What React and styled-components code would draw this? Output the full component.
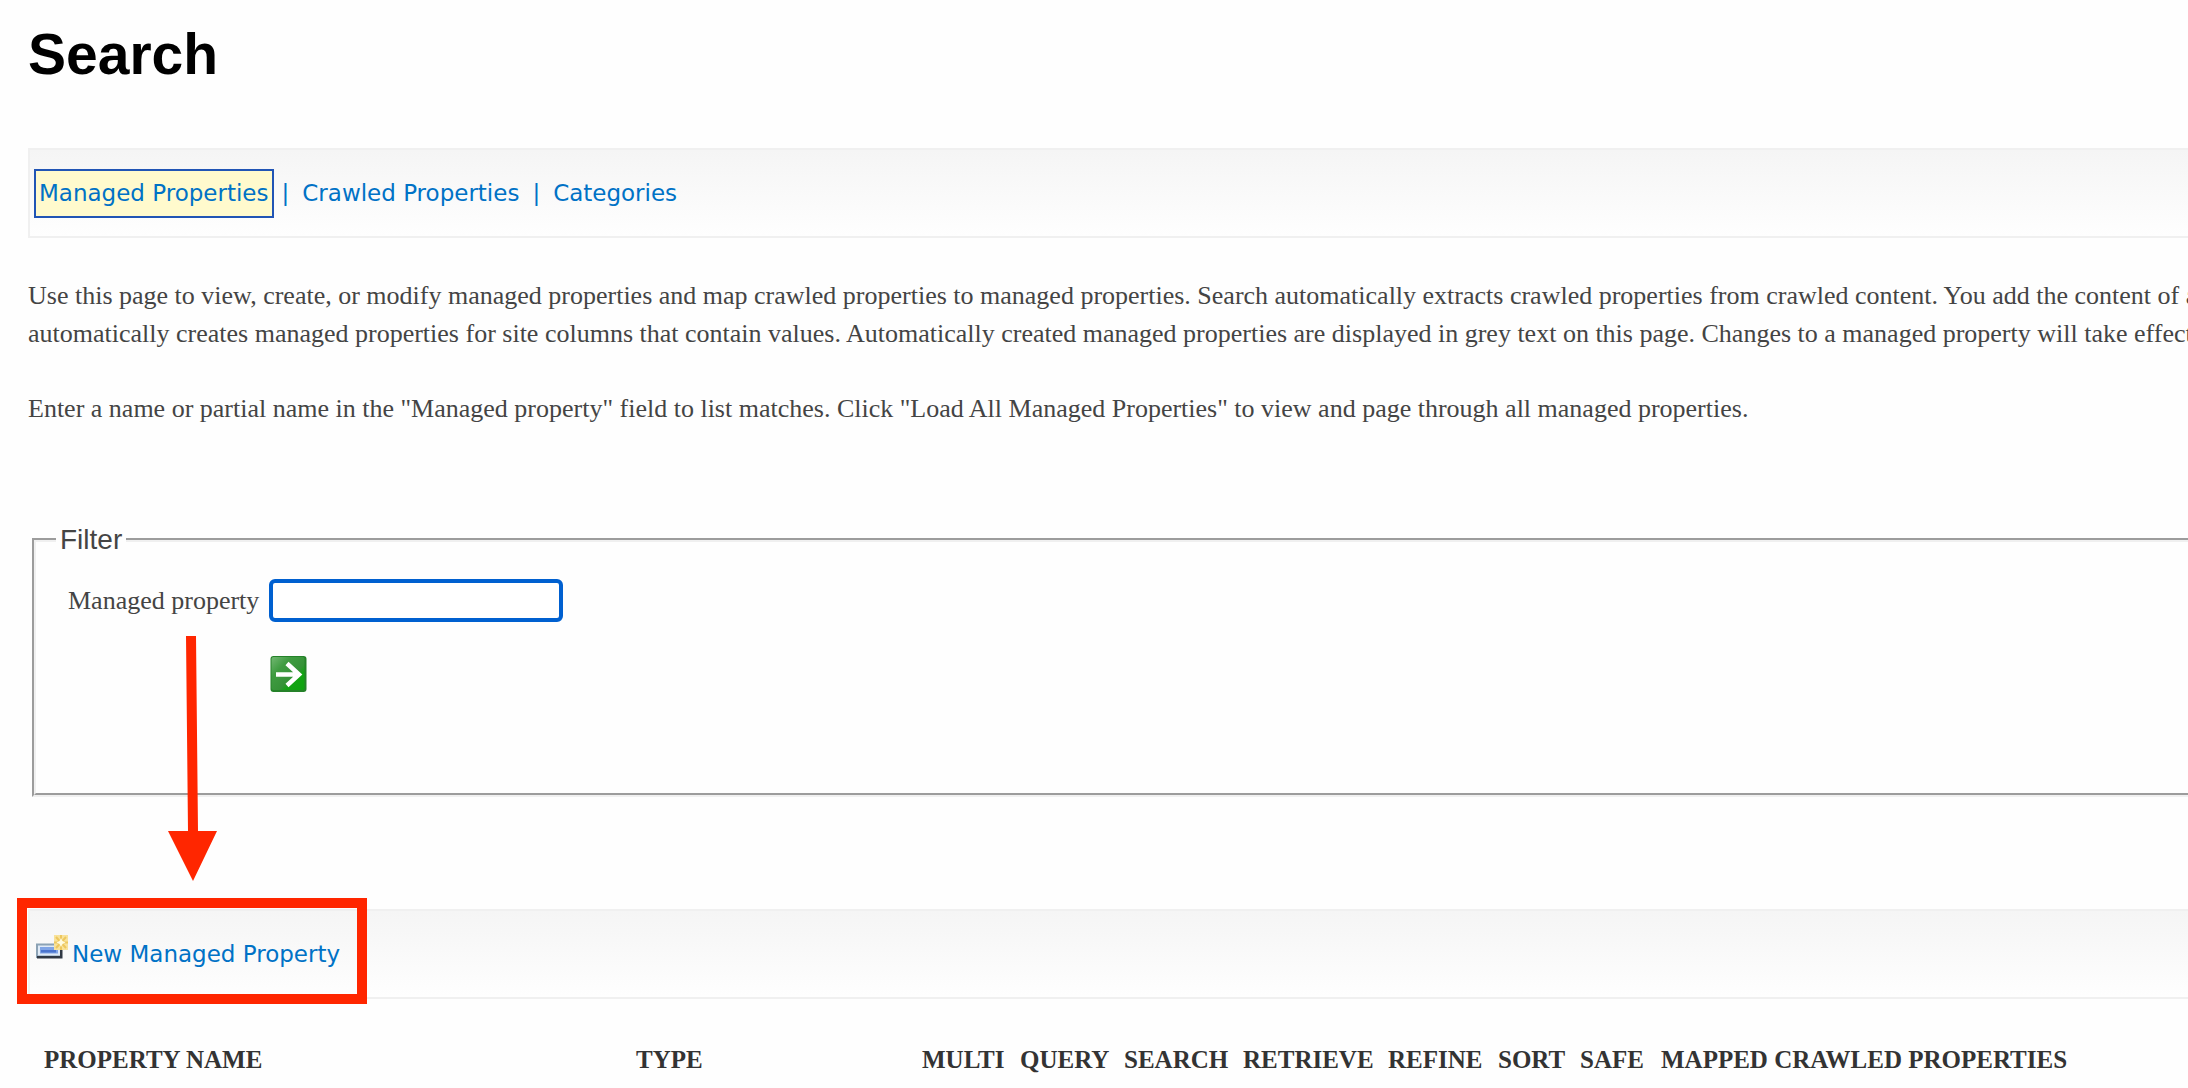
import React from "react";
import styled, { createGlobalStyle } from "styled-components";

const serif = `"Liberation Serif", "Times New Roman", serif`;
const sans = `"Liberation Sans", Arial, sans-serif`;
const verdana = `Verdana, "DejaVu Sans", sans-serif`;

const GlobalStyle = createGlobalStyle`
  * { box-sizing: border-box; }
  html { overflow: hidden; }
  body {
    margin: 0;
    background: #fefefe;
    color: #444;
    font-family: ${serif};
    font-size: 26px;
    line-height: 38px;
  }
`;

const Page = styled.main`
  position: relative;
  padding: 22px 0 0 28px;
  overflow: hidden;
`;

const Title = styled.h1`
  margin: 0 0 62px;
  color: #000;
  font: bold 57px/64px ${sans};
`;

const Bar = styled.nav`
  display: flex;
  align-items: center;
  gap: 8px;
  height: 90px;
  padding: 1px 0 0 4px;
  border: 2px solid #f0f0f0;
  border-right: 0;
  background: linear-gradient(#f5f5f5, #fefefe);
  color: #0072c6;
  font: 23px/45px ${verdana};
`;

const BarLink = styled.a`
  color: #0072c6;
  text-decoration: none;
  padding: 0 3px;
  border: 2px solid ${(p) => (p.$active ? "#2155b5" : "transparent")};
  background: ${(p) => (p.$active ? "#fffacd" : "transparent")};
`;

const Intro = styled.section`
  padding: 39px 0 0;
  white-space: nowrap;
`;

const Paragraph = styled.p`
  margin: 0 0 37px;
`;

const Filter = styled.fieldset`
  height: 272px;
  margin: 97px 0 112px 4px;
  padding: 24px 0 0 32px;
  border: 4px groove #f0f0f0;
  border-right: 0;
`;

const Legend = styled.legend`
  margin-left: -12px;
  padding: 0 4px;
  font: 28px/30px ${sans};
`;

const FilterForm = styled.form`
  display: grid;
  grid-template-columns: 193px 294px;
  column-gap: 8px;
  row-gap: 33px;
  align-items: center;
  white-space: nowrap;
`;

const TextInput = styled.input`
  width: 100%;
  height: 43px;
  padding: 0 8px;
  border: 4px solid #0060d0;
  border-radius: 6px;
  outline: none;
  background: #fff;
  color: #444;
  font: 26px ${serif};
`;

const GoButton = styled.button`
  grid-column: 2;
  width: 38px;
  height: 38px;
  padding: 0;
  border: 0;
  background: none;
  svg { display: block; }
`;

const Properties = styled.table`
  margin-top: 42px;
  margin-left: 8px;
  border-collapse: collapse;
  color: #333;
  white-space: nowrap;
`;

const HeaderCell = styled.th`
  width: ${(p) => (p.$width ? p.$width + "px" : "auto")};
  min-width: ${(p) => (p.$width ? p.$width + "px" : "0")};
  padding: 0 4px 0 8px;
  text-align: left;
  font: bold 25px/38px ${serif};
`;

const Annotation = styled.svg`
  position: absolute;
  left: 0;
  top: 0;
  pointer-events: none;
`;

const columns = [
  ["PROPERTY NAME", 592],
  ["TYPE", 286],
  ["MULTI", 98],
  ["QUERY", 104],
  ["SEARCH", 119],
  ["RETRIEVE", 145],
  ["REFINE", 110],
  ["SORT", 82],
  ["SAFE", 81],
  ["MAPPED CRAWLED PROPERTIES", 0],
];

function GoIcon() {
  return (
    <svg width="38" height="38" viewBox="0 0 38 38" aria-hidden="true">
      <defs>
        <linearGradient id="go" x1="0" y1="0" x2="1" y2="1">
          <stop offset="0" stopColor="#72b772" />
          <stop offset=".3" stopColor="#3f9c41" />
          <stop offset=".6" stopColor="#369238" />
          <stop offset=".72" stopColor="#12a312" />
          <stop offset="1" stopColor="#0da30d" />
        </linearGradient>
      </defs>
      <rect x="1.5" y="1" width="36" height="36" rx="3" fill="#258229" />
      <rect x="2.5" y="2" width="33" height="33" rx="2" fill="url(#go)" />
      <path d="M7 19.5H31M18 8.5L30 19.5L18 30.500" fill="none" stroke="#fff" strokeWidth="4.500" />
    </svg>
  );
}

function NewItemIcon() {
  return (
    <svg width="33" height="26" viewBox="0 0 33 26" aria-hidden="true">
      <path d="M0 8.500H26V23H0Z" fill="#8ba2b5" />
      <path d="M1 21H24V10H26.500V23.500H1Z" fill="#303844" />
      <path d="M2 10.500H24V20.500H2Z" fill="#dfeaf7" />
      <path d="M4 12H22V18.500H4Z" fill="#7fa4e6" />
      <path d="M5 15H20V17.500H5Z" fill="#4a74cf" />
      <path d="M18 0H32V15H18Z" fill="#f8e29a" />
      <path d="M25 0V15M18 7.500H32M20 2L30 13M30 2L20 13" stroke="#edc75e" strokeWidth="2" />
      <path d="M25 3L26.500 6L29.500 7.500L26.500 9L25 12L23.500 9L20.500 7.500L23.500 6Z" fill="#fffbe0" />
    </svg>
  );
}

const NewLink = styled(BarLink)`
  display: flex;
  gap: 3px;
  padding: 0;
  svg { margin-top: 3px; }
`;

export default function App() {
  return (
    <>
      <GlobalStyle />
      <Page>
        <Title>Search</Title>
        <Bar aria-label="Search schema">
          <BarLink href="#managed" $active>Managed Properties</BarLink>
          <span>|</span>
          <BarLink href="#crawled">Crawled Properties</BarLink>
          <span>|</span>
          <BarLink href="#categories">Categories</BarLink>
        </Bar>
        <Intro>
          <Paragraph>
            Use this page to view, create, or modify managed properties and map crawled properties to managed properties. Search automatically extracts crawled properties from crawled content. You add the content of a
            <br />
            automatically creates managed properties for site columns that contain values. Automatically created managed properties are displayed in grey text on this page. Changes to a managed property will take effect
          </Paragraph>
          <Paragraph>
            Enter a name or partial name in the "Managed property" field to list matches. Click "Load All Managed Properties" to view and page through all managed properties.
          </Paragraph>
        </Intro>
        <Filter>
          <Legend>Filter</Legend>
          <FilterForm onSubmit={(e) => e.preventDefault()}>
            <label htmlFor="property">Managed property</label>
            <TextInput id="property" type="text" />
            <GoButton type="submit" aria-label="Filter properties"><GoIcon /></GoButton>
          </FilterForm>
        </Filter>
        <Bar aria-label="Property actions">
          <NewLink href="#new"><NewItemIcon />New Managed Property</NewLink>
        </Bar>
        <Properties>
          <thead>
            <tr>
              {columns.map(([name, width]) => (
                <HeaderCell key={name} scope="col" $width={width}>{name}</HeaderCell>
              ))}
            </tr>
          </thead>
        </Properties>
        <Annotation width="400" height="1020" aria-hidden="true">
          <path d="M186 636H196L198 831H217L193 881L168 831H188Z" fill="#ff2600" />
          <rect x="22" y="903" width="340" height="96" fill="none" stroke="#ff2600" strokeWidth="10" />
        </Annotation>
      </Page>
    </>
  );
}
